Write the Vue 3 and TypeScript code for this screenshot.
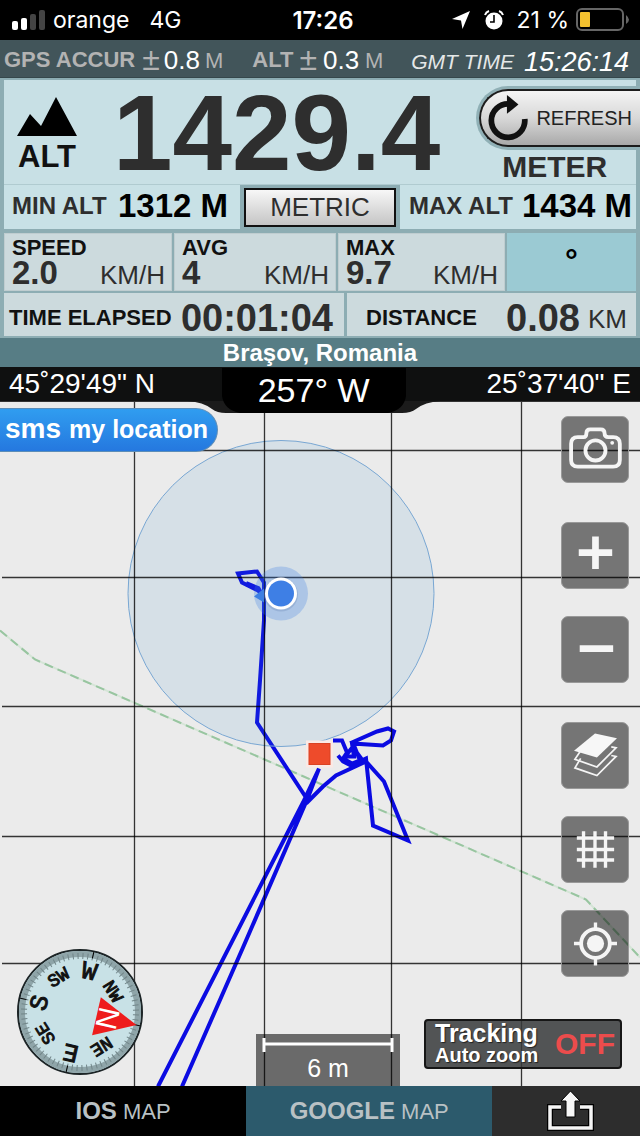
<script setup lang="ts">
interface Dial {
  label: string
  angle: number
  size: number
  radius: number
}

interface Speed {
  name: string
  value: string
}

const heading = 103

const speeds: Speed[] = [
  { name: 'SPEED', value: '2.0' },
  { name: 'AVG', value: '4' },
  { name: 'MAX', value: '9.7' },
]

const dial: Dial[] = [
  { label: 'NE', angle: 45, size: 18, radius: 35 },
  { label: 'E', angle: 90, size: 25, radius: 34 },
  { label: 'SE', angle: 135, size: 18, radius: 35 },
  { label: 'S', angle: 180, size: 25, radius: 34 },
  { label: 'SW', angle: 225, size: 18, radius: 35 },
  { label: 'W', angle: 270, size: 25, radius: 34 },
  { label: 'NW', angle: 315, size: 18, radius: 33 },
]

const ticks: number[] = Array.from({ length: 72 }, (_, i) => i * 5)
const columns: number[] = [134, 264, 391, 521]
const rows: number[] = [450, 577, 706, 836, 963]
</script>

<template>
  <div class="screen">
    <header class="status">
      <div class="status-side">
        <svg class="bars" width="34" height="22" viewBox="0 0 34 22" aria-hidden="true">
          <rect x="0" y="12" width="6" height="9" rx="2" fill="#fff" />
          <rect x="9" y="9" width="6" height="12" rx="2" fill="#fff" />
          <rect x="18" y="5" width="6" height="16" rx="2" fill="#444" />
          <rect x="27" y="1" width="6" height="20" rx="2" fill="#444" />
        </svg>
        <span>orange</span>
        <span class="network">4G</span>
      </div>
      <strong class="clock">17:26</strong>
      <div class="status-side end">
        <svg width="18" height="18" viewBox="0 0 18 18" aria-hidden="true">
          <path d="M18 0 L10.500 18 L9 9.500 L0 8 Z" fill="#fff" />
        </svg>
        <svg class="alarm" width="20" height="20" viewBox="0 0 20 20" aria-hidden="true">
          <circle cx="10" cy="11" r="8.500" fill="#fff" />
          <path d="M1 5 Q2 2 5 1 M19 5 Q18 2 15 1" stroke="#fff" stroke-width="2" fill="none" />
          <path d="M10 5 V12 H6" stroke="#000" stroke-width="1.600" fill="none" />
        </svg>
        <span>21 %</span>
        <svg class="battery" width="54" height="24" viewBox="0 0 54 24" aria-hidden="true">
          <rect x="1" y="1" width="46" height="21" rx="5" fill="none" stroke="#666" stroke-width="2" />
          <rect x="4" y="4" width="10" height="15" rx="1" fill="#f3c12f" />
          <path d="M50 7 Q56 12 50 16 Z" fill="#666" />
        </svg>
      </div>
    </header>

    <section class="accuracy">
      <b>GPS ACCUR</b>
      <span class="pm">±</span>
      <span class="figure">0.8</span>
      <span class="metre">M</span>
      <b class="alt-tag">ALT</b>
      <span class="pm">±</span>
      <span class="figure">0.3</span>
      <span class="metre">M</span>
      <i class="gmt">GMT TIME</i>
      <i class="gmt-time">15:26:14</i>
    </section>

    <section class="panel">
      <div class="altitude">
        <div class="alt-label">
          <svg width="62" height="40" viewBox="0 0 62 40" aria-hidden="true">
            <path d="M1 39 L14 17 L25 29 L40 0 L61 39 Z" fill="#000" />
          </svg>
          <b>ALT</b>
        </div>
        <strong class="alt-value">1429.4</strong>
        <div class="alt-side">
          <button class="refresh" type="button">
            <svg width="40" height="46" viewBox="0 0 38 44" aria-hidden="true">
              <path d="M20 8.500 A16 16 0 1 0 35 23" fill="none" stroke="#111" stroke-width="5.500" />
              <path d="M18 0 L29 9 L18 18 Z" fill="#111" />
            </svg>
            REFRESH
          </button>
          <b class="meter">METER</b>
        </div>
      </div>

      <div class="range">
        <div class="cell limit"><b>MIN ALT</b><strong>1312 M</strong></div>
        <button class="metric" type="button">METRIC</button>
        <div class="cell limit max"><b>MAX ALT</b><strong>1434 M</strong></div>
      </div>

      <div class="speeds">
        <div v-for="s in speeds" :key="s.name" class="cell speed">
          <b>{{ s.name }}</b>
          <div class="reading"><strong>{{ s.value }}</strong><span>KM/H</span></div>
        </div>
        <div class="cell degree">°</div>
      </div>

      <div class="totals">
        <div class="cell total"><b>TIME ELAPSED</b><strong>00:01:04</strong></div>
        <div class="cell total distance"><b>DISTANCE</b><strong>0.08</strong><span>KM</span></div>
      </div>
    </section>

    <div class="city">Braşov, Romania</div>

    <section class="coords">
      <span>45˚29'49" N</span>
      <span>25˚37'40" E</span>
      <div class="bearing">
        <svg width="252" height="46" viewBox="0 0 252 46" aria-hidden="true">
          <path d="M0 34 Q15 35 24 42 Q29 46 38 46 H214 Q223 46 228 42 Q237 35 252 34 Z" fill="#1b1b1b" />
          <path d="M34 1 H218 V29 Q216 43 200 46 H52 Q36 43 34 29 Z" fill="#000" />
        </svg>
        <span>257° W</span>
      </div>
    </section>

    <main class="map">
      <svg class="canvas" viewBox="0 401 640 685" preserveAspectRatio="xMidYMid slice" aria-hidden="true">
        <path d="M0 630 L35 659 L586 899 L640 957" fill="none" stroke="#d5e5d7" stroke-width="2" />
        <path d="M0 630 L35 659 L586 899 L640 957" fill="none" stroke="#98c5a0" stroke-width="2" stroke-dasharray="9 5" />
        <path
          d="M158 1086 L303 802 L319 768 M182 1086 L243 947 L308 797 L319 768 M306 797 L257 722 L260 680 L264 620 L264 582 L257 571 L238 573 L242 582 L260 591 M306 797 L308 801 L323 786 L336 775 L366 761 L384 781 L408 840 L373 825 L366 758 L351 765 L343 761 L338 755 M333 740 L342 740 L347 752 L343 758 L352 763 L362 759 L356 751 L352 742 L377 731 L388 728 L394 731 L391 740 L383 745 L352 743 L354 756 L345 756 L354 745 L360 760"
          fill="none"
          stroke="#0b0be2"
          stroke-width="4"
        />
        <path d="M246 583 L258 588 L261 593" stroke="#0b0be2" stroke-width="5" fill="none" />
        <circle cx="281" cy="593" r="153" fill="#4292ce" fill-opacity="0.120" stroke="#79a7d3" />
        <g stroke="#000" stroke-opacity="0.780" stroke-width="1.300">
          <line v-for="x in columns" :key="x" :x1="x + 0.5" :x2="x + 0.5" y1="401" y2="1086" />
          <line v-for="y in rows" :key="y" x1="2" x2="640" :y1="y" :y2="y" />
        </g>
        <circle cx="281" cy="593" r="27" fill="#3b7ee4" fill-opacity="0.270" />
        <path d="M254 596 L264 588 V602 Z" fill="#3d7fe2" />
        <circle cx="281" cy="594" r="17" fill="#7793bd" fill-opacity="0.400" />
        <circle cx="281" cy="593" r="16" fill="#fff" />
        <circle cx="281" cy="593" r="13" fill="#3e7fe5" />
        <rect x="306" y="740" width="27" height="27" fill="#fbe9e5" />
        <rect x="309" y="743" width="21" height="21" fill="#ee4b2b" stroke="#d94224" />
      </svg>

      <button class="sms" type="button"><span class="sms-word">sms</span>my location</button>

      <div class="tools">
        <div class="tool-group">
          <button class="tool" type="button" aria-label="Camera">
            <svg viewBox="0 0 68 68">
              <path d="M16 21 H22 Q25 21 25 17 Q25 13 29 13 H40 Q44 13 44 17 Q44 21 48 21 H53 Q60 21 60 28 V45 Q60 52 53 52 H16 Q9 52 9 45 V28 Q9 21 16 21 Z" fill="none" stroke="#f5f5f5" stroke-width="4" />
              <circle cx="34.500" cy="35" r="10.500" fill="none" stroke="#f5f5f5" stroke-width="4" />
              <circle cx="52" cy="27" r="2" fill="#f5f5f5" />
            </svg>
          </button>
        </div>
        <div class="tool-group">
          <button class="tool" type="button" aria-label="Zoom in">
            <svg viewBox="0 0 68 68"><path d="M17 31 H52 M34.500 14 V48" stroke="#f5f5f5" stroke-width="7" /></svg>
          </button>
          <button class="tool" type="button" aria-label="Zoom out">
            <svg viewBox="0 0 68 68"><path d="M18 33 H53" stroke="#f5f5f5" stroke-width="7" /></svg>
          </button>
        </div>
        <div class="tool-group">
          <button class="tool" type="button" aria-label="Layers">
            <svg viewBox="0 0 68 68">
              <g fill="none" stroke="#f5f5f5" stroke-width="1.800">
                <path d="M19 37 L13 47 L36 55 L56 35 L51 34" />
                <path d="M19 29 L13 38 L36 46 L56 26 L51 25" />
              </g>
              <path d="M12 29 L34 11 L57 16 L36 36 Z" fill="#f7f7f7" />
            </svg>
          </button>
          <button class="tool" type="button" aria-label="Grid">
            <svg viewBox="0 0 68 68"><path d="M22 15 V53 M34 15 V53 M45 15 V53 M15 22 H54 M15 34 H54 M15 45 H54" stroke="#f5f5f5" stroke-width="3.500" /></svg>
          </button>
          <button class="tool" type="button" aria-label="My position">
            <svg viewBox="0 0 68 68">
              <circle cx="34.500" cy="34" r="15" fill="none" stroke="#f5f5f5" stroke-width="4" />
              <circle cx="34.500" cy="34" r="9" fill="#f5f5f5" />
              <path d="M34.500 12 V19 M34.500 49 V57 M12 34 H19 M50 34 H57" stroke="#f5f5f5" stroke-width="3.500" />
            </svg>
          </button>
        </div>
      </div>

      <svg class="compass" viewBox="-64 -64 128 128" role="img" aria-label="Compass">
        <circle r="62" fill="#c8e1e6" stroke="#1c2426" stroke-width="2" />
        <circle r="58" fill="none" stroke="#8fa5a9" stroke-width="6" />
        <g :transform="`rotate(${heading})`">
          <line v-for="t in ticks" :key="t" y1="-59" y2="-53" stroke="#718588" :transform="`rotate(${t})`" />
          <path d="M0 -62 V-55 M62 0 H55 M0 62 V55 M-62 0 H-55" stroke="#000" />
          <path d="M0 -58 L20 -17 L-19 -17 Z" fill="#ee1c1c" />
          <text class="north" y="-18">N</text>
          <g v-for="d in dial" :key="d.label" :transform="`rotate(${d.angle})`">
            <text class="point" :y="-d.radius" :font-size="d.size">{{ d.label }}</text>
          </g>
        </g>
      </svg>

      <div class="scale">
        <svg width="132" height="14" viewBox="0 0 132 14" aria-hidden="true">
          <path d="M2 0 V14 M130 0 V14 M2 6 H130" stroke="#fff" stroke-width="3" />
        </svg>
        <span>6 m</span>
      </div>

      <button class="tracking" type="button">
        <span class="tracking-text"><b>Tracking</b><small>Auto zoom</small></span>
        <strong>OFF</strong>
      </button>
    </main>

    <nav class="tabs">
      <button class="tab" type="button"><b>IOS</b> MAP</button>
      <button class="tab active" type="button"><b>GOOGLE</b> MAP</button>
      <button class="tab share" type="button" aria-label="Share">
        <svg width="48" height="40" viewBox="0 0 48 40">
          <path d="M15 16 H4 V37 H45 V16 H34" fill="none" stroke="#000" stroke-width="6" />
          <path d="M15 16 H4 V37 H45 V16 H34" fill="none" stroke="#f5f5f5" stroke-width="3.500" />
          <path d="M24.500 0 L34 10 H29 V26 H20 V10 H15 Z" fill="#f7f7f7" stroke="#000" />
        </svg>
      </button>
    </nav>
  </div>
</template>

<style>
body {
  margin: 0;
  background: #000;
}
</style>

<style scoped>
.screen {
  display: flex;
  flex-direction: column;
  min-height: 100vh;
  font-family: "Liberation Sans", Arial, sans-serif;
  color: #2e2e2e;
}

button {
  font: inherit;
  padding: 0;
  border: 0;
  box-sizing: border-box;
}

.status {
  display: grid;
  grid-template-columns: 1fr auto 1fr;
  align-items: center;
  height: 40px;
  padding: 0 10px 0 12px;
  background: #000;
  color: #fff;
  font-family: Inter, sans-serif;
  font-size: 23px;
}

.status-side {
  display: flex;
  align-items: center;
  gap: 7px;
}

.end {
  justify-content: flex-end;
}

.network {
  margin-left: 13px;
}

.alarm {
  margin: 0 6px 0 7px;
}

.clock {
  padding-left: 4px;
  font-weight: 600;
  font-size: 24px;
}

.accuracy {
  display: flex;
  align-items: center;
  height: 38px;
  padding: 0 11px 0 4px;
  box-sizing: border-box;
  border-bottom: 1px solid #35474b;
  background: #42555a;
  color: #b3b3b3;
  font-size: 22px;
  line-height: 24px;
  white-space: nowrap;
}

.accuracy b {
  padding-top: 2px;
}

.pm {
  margin-left: 7px;
  font-size: 32px;
}

.figure {
  margin-left: 4px;
  padding-top: 2px;
  color: #fff;
  font-size: 26px;
}

.metre {
  margin-left: 5px;
  padding-top: 4px;
}

.alt-tag {
  margin-left: 29px;
}

.alt-tag + .pm {
  margin-left: 6px;
}

.alt-tag ~ .figure {
  margin-left: 6px;
}

.alt-tag ~ .metre {
  margin-left: 6px;
}

.gmt {
  margin-left: auto;
  padding-top: 6px;
  color: #e5e8e8;
  font-size: 21px;
}

.gmt-time {
  margin-left: 10px;
  padding-top: 6px;
  color: #fff;
  font-size: 27px;
}

.panel {
  display: flex;
  flex-direction: column;
  padding: 2px 4px;
  background: #8dadb3;
}

.altitude {
  display: flex;
  align-items: center;
  height: 104px;
  border-bottom: 1px solid #b0cbd0;
  background: #c8e0e5;
}

.alt-label {
  display: flex;
  flex-direction: column;
  align-items: center;
  margin: 10px 0 0 12px;
  color: #111;
  font-size: 31px;
  line-height: 40px;
}

.alt-value {
  margin-left: 35px;
  padding-top: 2px;
  font-size: 107px;
  line-height: 102px;
}

.alt-side {
  display: flex;
  flex-direction: column;
  align-items: center;
  margin: 10px -4px 0 auto;
}

.refresh {
  display: flex;
  align-items: center;
  gap: 8px;
  height: 58px;
  padding: 0 8px 0 7px;
  border: 2px solid #1c1c1c;
  border-right: 0;
  border-radius: 29px 0 0 29px;
  background: linear-gradient(#f4f4f4, #d8d8d8 50%, #a9a9a9);
  box-shadow: 0 0 0 3px #90b0b6;
  color: #222;
  font-size: 20px;
}

.meter {
  margin: 2px 10px 0 0;
  font-size: 30px;
  line-height: 36px;
}

.range {
  display: grid;
  grid-template-columns: 236fr 152fr 236fr;
  gap: 4px;
  height: 44px;
}

.limit {
  display: flex;
  align-items: center;
  justify-content: space-between;
  padding: 0 12px 3px 8px;
  background: #c8e1e6;
  font-size: 24px;
  white-space: nowrap;
}

.limit strong {
  color: #000;
  font-size: 33px;
  line-height: 40px;
}

.max {
  padding-right: 4px;
  padding-left: 9px;
}

.metric {
  margin: 3px 0 2px;
  border: 2px solid #111;
  background: linear-gradient(#f7f7f7, #c5c5c5);
  color: #2e2e2e;
  font-size: 26px;
}

.speeds {
  display: grid;
  grid-template-columns: 168fr 162fr 167fr 129fr;
  gap: 2px;
  margin-top: 4px;
}

.speed {
  padding: 2px 6px 2px 7px;
  border: 1px solid #bfcdd0;
  background: #ccdadd;
  font-size: 22px;
  line-height: 24px;
}

.speed b,
.total b {
  color: #111;
}

.reading {
  display: flex;
  align-items: baseline;
  justify-content: space-between;
  font-size: 26px;
  line-height: 26px;
}

.reading strong {
  font-size: 33px;
}

.degree {
  background: #9bcad3;
  color: #000;
  font-size: 32px;
  line-height: 54px;
  font-weight: bold;
  text-align: center;
}

.totals {
  display: grid;
  grid-template-columns: 340fr 289fr;
  gap: 3px;
  height: 43px;
  margin-top: 2px;
}

.total {
  display: flex;
  align-items: center;
  justify-content: space-between;
  padding: 6px 11px 0 5px;
  background: #ccdadd;
  font-size: 22px;
  white-space: nowrap;
}

.total strong {
  font-size: 38px;
  line-height: 36px;
}

.distance {
  padding-right: 9px;
  padding-left: 19px;
}

.distance strong {
  margin-left: auto;
}

.distance span {
  margin-left: 8px;
  padding-top: 4px;
  font-size: 26px;
}

.city {
  height: 29px;
  background: #577d85;
  color: #fff;
  font-size: 24px;
  font-weight: bold;
  line-height: 29px;
  text-align: center;
}

.coords {
  position: relative;
  z-index: 1;
  display: flex;
  justify-content: space-between;
  height: 34px;
  padding: 0 9px;
  box-sizing: border-box;
  background: #0f1010;
  color: #fff;
  font-size: 28px;
  line-height: 34px;
}

.bearing {
  position: absolute;
  top: 0;
  left: 49%;
  width: 252px;
  height: 46px;
  margin-left: -126px;
  font-size: 34px;
  line-height: 46px;
  text-align: center;
}

.bearing svg {
  position: absolute;
  inset: 0;
}

.bearing span {
  position: relative;
}

.map {
  position: relative;
  flex: 1;
  min-height: 640px;
  overflow: hidden;
  border-top: 1px solid #333;
  box-sizing: border-box;
  background: #ebebeb;
}

.canvas {
  position: absolute;
  inset: 0;
  width: 100%;
  height: 100%;
}

.sms {
  position: absolute;
  top: 6px;
  left: 0;
  height: 44px;
  padding: 0 9px 3px 5px;
  border: 1px solid #5c8db8;
  border-left: 0;
  border-radius: 0 22px 22px 0;
  background: linear-gradient(#309df0, #2578df);
  color: #fff;
  font-size: 25px;
  font-weight: bold;
}

.sms-word {
  margin-right: 8px;
  font-size: 28px;
}

.tools {
  position: absolute;
  top: 14px;
  right: 11px;
  display: flex;
  flex-direction: column;
  gap: 39px;
}

.tool-group {
  display: flex;
  flex-direction: column;
  gap: 27px;
}

.tool {
  width: 68px;
  height: 67px;
  border: 1px solid #999;
  border-radius: 7px;
  background: rgba(0, 0, 0, 0.5);
}

.tool svg {
  display: block;
  width: 100%;
  height: 100%;
}

.compass {
  position: absolute;
  left: 16px;
  bottom: 10px;
  width: 128px;
  height: 128px;
}

.compass text {
  text-anchor: middle;
  font-family: "Liberation Mono", monospace;
}

.compass .north {
  fill: #fff;
  font-family: "Liberation Sans", Arial, sans-serif;
  font-size: 30px;
}

.point {
  fill: #111;
  stroke: #111;
}

.scale {
  position: absolute;
  bottom: 0;
  left: 40%;
  display: flex;
  flex-direction: column;
  align-items: center;
  width: 144px;
  height: 52px;
  padding-top: 4px;
  box-sizing: border-box;
  background: rgba(0, 0, 0, 0.55);
  color: #fff;
  font-size: 25px;
  line-height: 32px;
}

.tracking {
  position: absolute;
  right: 18px;
  bottom: 17px;
  display: flex;
  align-items: center;
  justify-content: space-between;
  width: 198px;
  height: 50px;
  padding: 0 5px 0 9px;
  border: 2px solid #161616;
  border-radius: 4px;
  background: rgba(55, 57, 59, 0.85);
  color: #fff;
  text-shadow: 1px 1px 1px #222;
}

.tracking-text {
  display: flex;
  flex-direction: column;
  text-align: left;
}

.tracking-text b {
  font-size: 25px;
  line-height: 22px;
}

.tracking-text small {
  font-size: 20px;
  font-weight: bold;
  line-height: 22px;
}

.tracking strong {
  color: #ec4c4c;
  font-size: 30px;
  text-shadow: none;
}

.tabs {
  display: grid;
  grid-template-columns: 5fr 5fr 3fr;
  height: 50px;
}

.tab {
  background: #000;
  color: #b9c1c4;
  font-size: 22px;
}

.tab b {
  font-size: 24px;
}

.active {
  background: #2c5a6c;
}

.share {
  background: #2d2d2d;
  display: flex;
  align-items: center;
  justify-content: center;
  padding-left: 8px;
}
</style>
